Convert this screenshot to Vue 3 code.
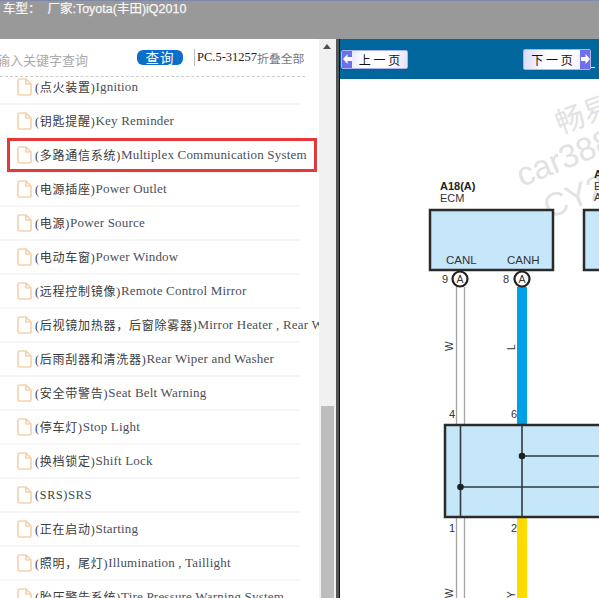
<script setup>
const rows = [
  { cn: "(点火装置)", en: "Ignition" },
  { cn: "(钥匙提醒)", en: "Key Reminder" },
  { cn: "(多路通信系统)", en: "Multiplex Communication System", marked: true },
  { cn: "(电源插座)", en: "Power Outlet" },
  { cn: "(电源)", en: "Power Source" },
  { cn: "(电动车窗)", en: "Power Window" },
  { cn: "(远程控制镜像)", en: "Remote Control Mirror" },
  { cn: "(后视镜加热器，后窗除雾器)", en: "Mirror Heater , Rear Window Defogger" },
  { cn: "(后雨刮器和清洗器)", en: "Rear Wiper and Washer" },
  { cn: "(安全带警告)", en: "Seat Belt Warning" },
  { cn: "(停车灯)", en: "Stop Light" },
  { cn: "(换档锁定)", en: "Shift Lock" },
  { cn: "(SRS)", en: "SRS" },
  { cn: "(正在启动)", en: "Starting" },
  { cn: "(照明，尾灯)", en: "Illumination , Taillight" },
  { cn: "(胎压警告系统)", en: "Tire Pressure Warning System" },
];
</script>

<template>
  <div class="page">
    <header class="topbar">
      <span class="title">车型：&nbsp;&nbsp;厂家:Toyota(丰田)iQ2010</span>
    </header>
    <main class="body">
      <section class="side">
        <div class="side-main">
          <div class="search">
            <span class="keyword">输入关键字查询</span>
            <button class="query">查询</button>
            <span class="code">PC.5-31257</span>
            <span class="fold">折叠全部</span>
          </div>
          <div class="list-view">
            <ul class="list">
              <li v-for="row in rows" :key="row.en" class="row" :class="{ marked: row.marked }">
                <svg class="doc" width="15" height="18" viewBox="0 0 15 18">
                  <path d="M2.500 1H9l5 5v9.500a1.500 1.500 0 0 1-1.500 1.500h-10A1.500 1.500 0 0 1 1 15.500v-13A1.500 1.500 0 0 1 2.500 1zM9 1v5h5" fill="#fff" stroke="#f4d3ae" stroke-width="1.700" stroke-linejoin="round" />
                </svg>
                <span class="cn">{{ row.cn }}</span><span class="en">{{ row.en }}</span>
              </li>
            </ul>
          </div>
        </div>
        <div class="scrollbar">
          <span class="arrow"></span>
          <span class="thumb"></span>
        </div>
      </section>
      <section class="viewer">
        <nav class="pager">
          <button class="page-btn">
            <span class="cap">
              <svg width="9" height="10" viewBox="0 0 9 10"><path d="M0 5l4.500-5v3h4.500v4H4.500v3z" fill="#fff" /></svg>
            </span>
            <span class="label">上 一 页</span>
          </button>
          <button class="page-btn next">
            <span class="label">下 一 页</span>
            <span class="cap">
              <svg width="9" height="10" viewBox="0 0 9 10"><path d="M9 5L4.500 0v3H0v4h4.500v3z" fill="#fff" /></svg>
            </span>
          </button>
        </nav>
        <div class="sheet">
          <svg class="diagram" width="259" height="519" viewBox="340 79 259 519">
            <g class="mark" fill="#e2e2e2" font-family="'Liberation Sans', 'Noto Sans CJK SC', sans-serif">
              <text x="560" y="134" font-size="29" transform="rotate(-20 560 134)">畅易</text>
              <text x="522" y="187" font-size="33" transform="rotate(-22 522 187)">car388</text>
              <text x="549" y="219" font-size="33" transform="rotate(-22 549 219)">CY2</text>
            </g>

            <rect x="430" y="210" width="123" height="60" fill="#c6e6f9" stroke="#2b2b2b" stroke-width="2.500" />
            <rect x="584" y="210" width="40" height="60" fill="#c6e6f9" stroke="#2b2b2b" stroke-width="2.500" />

            <path d="M456.500 287V598M464.500 287V598" stroke="#a5a5a5" stroke-width="1.300" fill="none" />
            <rect x="517" y="287" width="10" height="138" fill="#00a0e6" />
            <rect x="517" y="517" width="10" height="81" fill="#ffdc00" />

            <circle cx="460" cy="279" r="7.500" fill="#fff" stroke="#222" stroke-width="2.200" />
            <circle cx="522" cy="279" r="7.500" fill="#fff" stroke="#222" stroke-width="2.200" />

            <rect x="445" y="425" width="170" height="92" fill="#c6e6f9" stroke="#2b2b2b" stroke-width="2.500" />
            <path d="M460.500 425V517M522 425V517M522 456H599M460.500 487H599" stroke="#2f3a42" stroke-width="1.600" fill="none" />
            <circle cx="522" cy="456" r="3.300" fill="#1c2226" />
            <circle cx="460.500" cy="487" r="3.300" fill="#1c2226" />

            <g class="wiring" font-family="'Liberation Sans', Arial, sans-serif" font-size="11" fill="#333">
              <text x="440" y="190" font-weight="700" fill="#222">A18(A)</text>
              <text x="440" y="202">ECM</text>
              <text x="594" y="178" font-weight="700" fill="#222">A</text>
              <text x="594" y="190">E</text>
              <text x="594" y="201">A</text>
              <text x="446" y="264" font-size="11.500">CANL</text>
              <text x="507" y="264" font-size="11.500">CANH</text>
              <text x="442" y="283">9</text>
              <text x="503" y="283">8</text>
              <text x="456.500" y="283" font-size="10.500">A</text>
              <text x="518.500" y="283" font-size="10.500">A</text>
              <text x="449" y="418">4</text>
              <text x="511" y="418">6</text>
              <text x="449" y="532">1</text>
              <text x="511" y="532">2</text>
              <text x="453" y="351" transform="rotate(-90 453 351)" font-size="10">W</text>
              <text x="515" y="350" transform="rotate(-90 515 350)" font-size="10">L</text>
              <text x="453" y="598" transform="rotate(-90 453 598)" font-size="10">W</text>
              <text x="515" y="598" transform="rotate(-90 515 598)" font-size="10">Y</text>
            </g>
          </svg>
        </div>
      </section>
    </main>
  </div>
</template>

<style>
html,
body {
  margin: 0;
  overflow: hidden;
}
</style>

<style scoped>
.page {
  display: flex;
  flex-direction: column;
  height: 100vh;
  overflow: hidden;
  font-family: "Liberation Serif", "Noto Sans CJK SC", serif;
}

.topbar {
  flex: none;
  height: 38px;
  background: #999;
  border-top: 1px solid #7f8aa8;
}
.title {
  display: block;
  padding-left: 3px;
  font-family: "Liberation Sans", "Noto Sans CJK SC", sans-serif;
  font-size: 12.500px;
  line-height: 16px;
  color: #f6f6f6;
  -webkit-text-stroke: 0.25px #f6f6f6;
  white-space: nowrap;
}

.body {
  flex: 1;
  display: flex;
  min-height: 0;
}

.side {
  flex: none;
  display: flex;
  width: 336px;
  background: #fff;
}
.side-main {
  display: flex;
  flex-direction: column;
  width: 319px;
  overflow: hidden;
}

.search {
  flex: none;
  display: flex;
  align-items: center;
  height: 37px;
  width: 305px;
  border-bottom: 1px dashed #ccc;
  white-space: nowrap;
}
.keyword {
  flex: none;
  margin-left: -3px;
  width: 140px;
  font-size: 13px;
  color: #aaa;
  font-family: "Noto Sans CJK SC", sans-serif;
  padding-top: 3px;
}
.query {
  flex: none;
  width: 46px;
  height: 15px;
  padding: 0;
  border: 0;
  border-radius: 6px;
  background: #0b6fc9;
  color: #fff;
  font-family: "Noto Sans CJK SC", sans-serif;
  font-size: 13.500px;
  line-height: 15px;
  letter-spacing: 1px;
}
.code {
  margin-left: 11px;
  padding-left: 2px;
  border-left: 1px solid #bbb;
  font-size: 12.500px;
  line-height: 17px;
  color: #222;
}
.fold {
  margin-left: 0;
  font-family: "Noto Sans CJK SC", sans-serif;
  font-size: 11.800px;
  color: #777;
}

.list-view {
  flex: 1;
  min-height: 0;
  overflow: hidden;
}
.list {
  margin: -6px 0 0;
  padding: 0;
  list-style: none;
}
.row {
  position: relative;
  display: flex;
  align-items: center;
  width: 283px;
  height: 32px;
  padding-left: 17px;
  border-bottom: 2px solid #f6f6f6;
  white-space: nowrap;
  font-size: 13px;
  color: #4a4f5a;
}
.doc {
  flex: none;
  margin-right: 3px;
}
.cn {
  font-size: 12px;
  letter-spacing: 0.75px;
  color: #3a3a3a;
}
.en {
  letter-spacing: 0.2px;
}
.row.marked::after {
  content: "";
  position: absolute;
  left: 7px;
  top: -1px;
  width: 304px;
  height: 28px;
  border: 3px solid #e5383b;
}

.scrollbar {
  position: relative;
  width: 17px;
  background: #f1f1f1;
}
.arrow {
  position: absolute;
  top: 5px;
  left: 4px;
  border: 4px solid transparent;
  border-top: 0;
  border-bottom: 5px solid #505050;
}
.thumb {
  position: absolute;
  left: 2px;
  top: 367px;
  bottom: 0;
  width: 13px;
  background: #bdbdbd;
}

.viewer {
  flex: 1;
  display: flex;
  flex-direction: column;
  min-width: 0;
  border-left: 3px solid #555;
  box-shadow: inset 1px 0 0 #111;
}
.pager {
  flex: none;
  display: flex;
  justify-content: space-between;
  align-items: center;
  height: 40px;
  margin-left: 1px;
  padding: 0 8px 0 1px;
  background: #00669c;
}
.page-btn {
  position: relative;
  display: flex;
  align-items: center;
  width: 67px;
  height: 19px;
  padding: 0;
  border: 1px solid #a9b4f0;
  border-radius: 2px;
  background: linear-gradient(100deg, #d9d9f8, #fff 35%, #fff 70%, #e4e4fa);
}
.page-btn.next {
  width: 68px;
  height: 21px;
}
.page-btn.next::after {
  content: "";
  position: absolute;
  right: -5px;
  bottom: 1px;
  width: 4px;
  height: 1px;
  background: #dfe6ff;
}
.cap {
  flex: none;
  display: flex;
  align-items: center;
  justify-content: center;
  width: 10px;
  height: 100%;
  background: #6f6fec;
}
.label {
  flex: 1;
  font-family: "Noto Sans CJK SC", sans-serif;
  font-size: 12px;
  line-height: 17px;
  color: #111;
  text-align: center;
}
.sheet {
  flex: 1;
  min-height: 0;
  margin-left: 1px;
  background: #fff;
}
.diagram {
  display: block;
}
</style>
